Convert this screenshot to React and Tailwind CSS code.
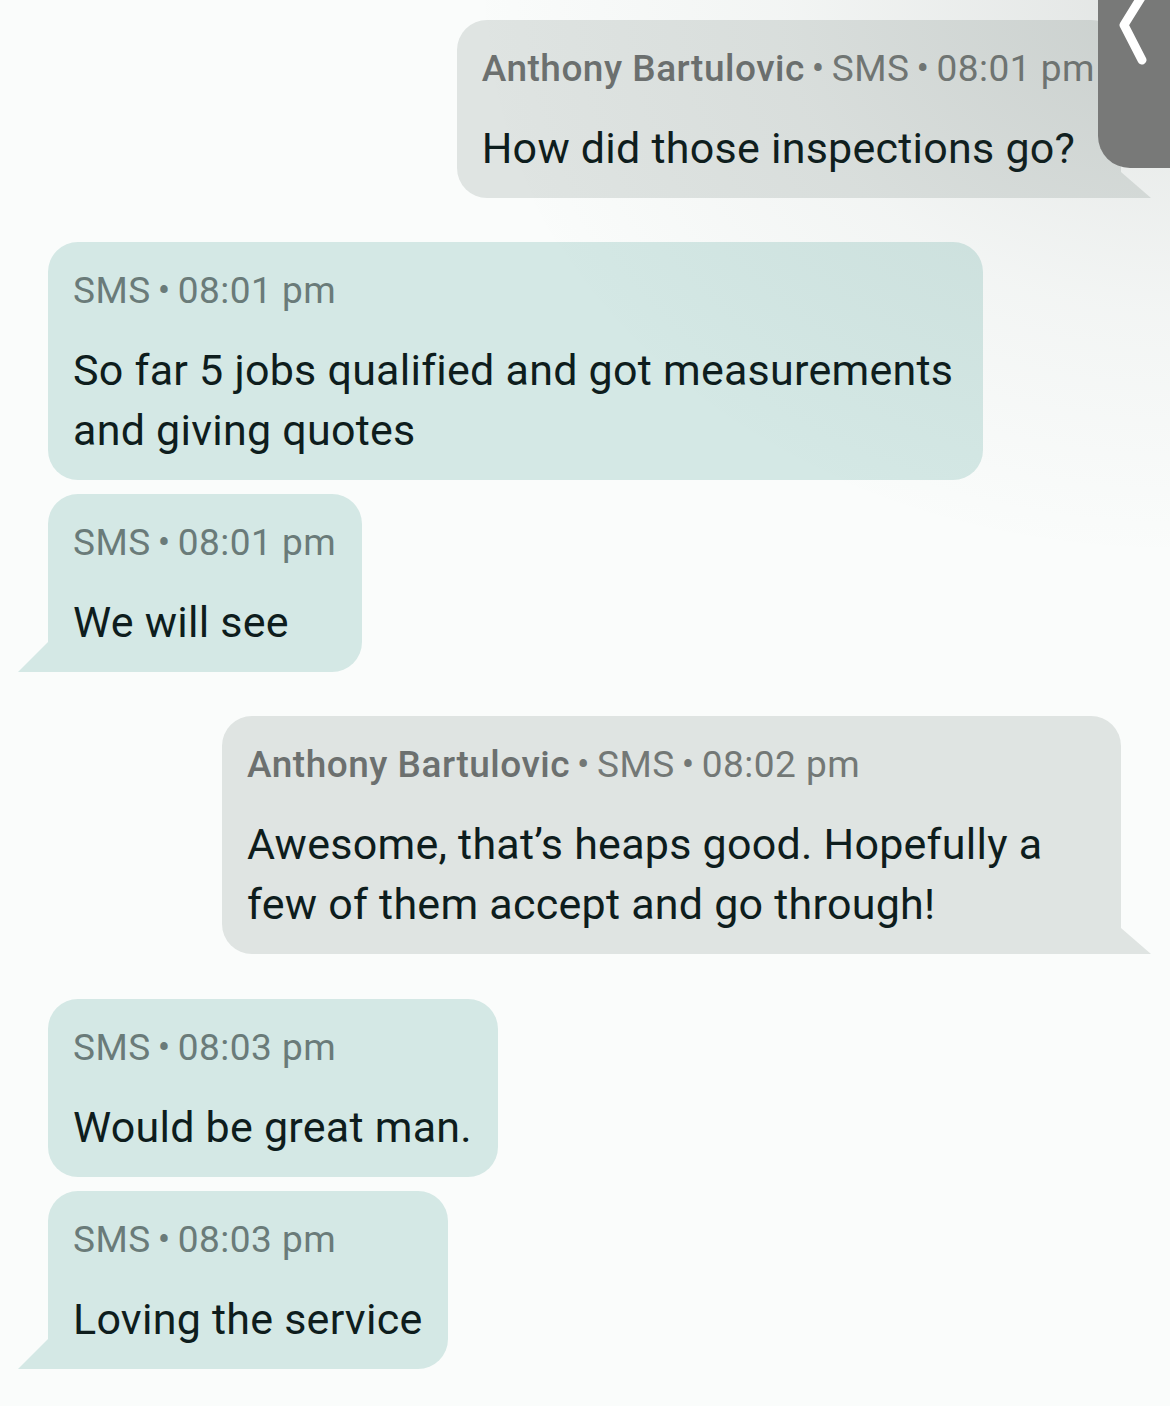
import React from "react";

const font = { fontFamily: "Roboto, 'Noto Sans', sans-serif" };

function Header({ name, time, out }) {
  return (
    <div
      className={`text-[37px] leading-[44px] tracking-[0.5px] whitespace-nowrap ${
        out ? "text-[#737876]" : "text-[#6a7b79]"
      }`}
    >
      {name && <span className="font-medium text-[#6c706f]">{name}</span>}
      {name && <span className="inline-block mx-[7px]">•</span>}
      <span>SMS</span>
      <span className="inline-block mx-[7px]">•</span>
      <span>{time}</span>
    </div>
  );
}

function Bubble({ out, name, time, text, tail, width }) {
  return (
    <div
      className={`relative ${out ? "self-end bg-[#dfe4e2]" : "self-start bg-[#d4e8e5]"} rounded-[30px] ${
        tail && out ? "rounded-br-none" : ""
      } ${tail && !out ? "rounded-bl-none" : ""} pl-[25px] pr-[26px] pt-[27px] pb-[20px] ${width || "w-fit"}`}
    >
      <Header name={name} time={time} out={out} />
      <div className="mt-[27px] text-[43px] leading-[60px] tracking-[0.25px] text-[#0e1d1d]">{text}</div>
      {tail && out && (
        <svg className="absolute right-[-30px] bottom-0" width="30" height="26" viewBox="0 0 30 26">
          <polygon points="0,0 30,26 0,26" fill="#dfe4e2" />
        </svg>
      )}
      {tail && !out && (
        <svg className="absolute left-[-30px] bottom-0" width="30" height="30" viewBox="0 0 30 30">
          <polygon points="30,0 30,30 0,30" fill="#d4e8e5" />
        </svg>
      )}
    </div>
  );
}

export default function App() {
  return (
    <div className="relative w-full min-h-[1406px] bg-[#fafcfb] overflow-hidden" style={font}>
      <div className="flex flex-col pl-[48px] pr-[49px] pt-[20px]">
        <Bubble out name="Anthony Bartulovic" time="08:01 pm" text="How did those inspections go?" tail />
        <div className="h-[44px]" />
        <Bubble
          time="08:01 pm"
          text="So far 5 jobs qualified and got measurements and giving quotes"
          width="w-[935px]"
        />
        <div className="h-[14px]" />
        <Bubble time="08:01 pm" text="We will see" tail />
        <div className="h-[44px]" />
        <Bubble
          out
          name="Anthony Bartulovic"
          time="08:02 pm"
          text="Awesome, that’s heaps good. Hopefully a few of them accept and go through!"
          tail
          width="w-[899px]"
        />
        <div className="h-[45px]" />
        <Bubble time="08:03 pm" text="Would be great man." />
        <div className="h-[14px]" />
        <Bubble time="08:03 pm" text="Loving the service" tail />
      </div>

      {/* soft shading from the top-right panel */}
      <div className="pointer-events-none absolute inset-0 bg-[radial-gradient(ellipse_700px_560px_at_100%_0%,rgba(60,70,66,0.13),rgba(60,70,66,0.04)_55%,transparent_100%)]" />

      {/* top-right back tab */}
      <div className="absolute right-0 top-0 w-[72px] h-[168px] bg-[#787978] rounded-bl-[32px]">
        <svg className="absolute left-0 top-0" width="72" height="80" viewBox="0 0 72 80">
          <polyline
            points="44,-4 26,25 44,60"
            fill="none"
            stroke="#ffffff"
            strokeWidth="9"
            strokeLinecap="round"
            strokeLinejoin="round"
          />
        </svg>
      </div>
    </div>
  );
}
